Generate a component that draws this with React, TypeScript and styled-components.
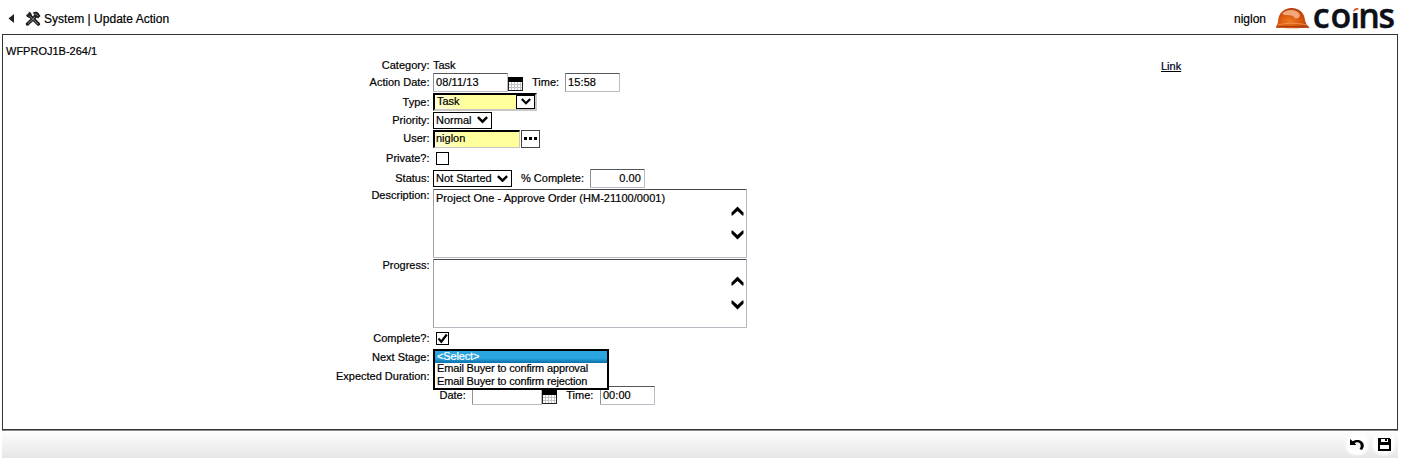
import React from "react";
import styled, { createGlobalStyle, css } from "styled-components";

const GlobalStyle = createGlobalStyle`
  *, *::before, *::after { box-sizing: border-box; }
  html, body { margin: 0; padding: 0; background: #fff; }
  body { font-family: "Liberation Sans", Arial, sans-serif; font-size: 11px; color: #000; -webkit-text-stroke: 0.2px #000; }
`;

const Page = styled.div`
  width: 1401px;
  height: 461px;
  padding: 0 3px 0 2px;
  display: flex;
  flex-direction: column;
`;

const Header = styled.header`
  height: 34px;
  flex: none;
  display: flex;
  align-items: center;
  justify-content: space-between;
  padding: 3px 3px 0 6px;
`;

const Crumb = styled.div`
  display: flex;
  align-items: center;
  font-size: 12px;
  letter-spacing: 0.03px;
  white-space: pre;
  svg { display: block; }
`;

const BackArrow = styled.svg`
  margin-right: 11px;
`;

const ToolsIcon = styled.svg`
  margin-right: 3px;
`;

const Brand = styled.div`
  display: flex;
  align-items: center;
  font-size: 12px;
`;

const UserName = styled.span`
  margin-right: 9px;
`;

const Panel = styled.main`
  height: 396px;
  flex: none;
  border: 1px solid #333;
  box-shadow: 0 1px 0 #8a8a8a;
  display: grid;
  grid-template-columns: 327px 831px auto;
`;

const RecordId = styled.div`
  padding: 10px 0 0 3px;
  line-height: 13px;
`;

const LinkCell = styled.div`
  padding-top: 25px;
  line-height: 13px;
`;

const LinkText = styled.a`
  font-size: 11px;
  color: #00002a;
  text-decoration: underline;
`;

const Form = styled.div`
  padding-top: 21px;
`;

const Row = styled.div<{ $h: number; $top?: boolean }>`
  height: ${(p) => p.$h}px;
  display: flex;
  align-items: ${(p) => (p.$top ? "flex-start" : "center")};
`;

const Label = styled.label<{ $drop?: number }>`
  width: 99.5px;
  flex: none;
  margin-right: 3.5px;
  text-align: right;
  line-height: 13px;
  white-space: nowrap;
  padding-top: ${(p) => p.$drop ?? 0}px;
`;

const InlineLabel = styled.span<{ $l: number; $r: number }>`
  margin: 0 ${(p) => p.$r}px 0 ${(p) => p.$l}px;
  line-height: 13px;
  white-space: nowrap;
`;

const Field = styled.div<{ $w: number; $right?: boolean }>`
  width: ${(p) => p.$w}px;
  height: 19px;
  border: 1px solid #b9bcc4;
  border-top-color: #55555c;
  border-left-color: #8d9098;
  border-radius: 1px;
  background: #fff;
  padding: 0 3px 0 2px;
  line-height: 17px;
  letter-spacing: 0.08px;
  text-align: ${(p) => (p.$right ? "right" : "left")};
`;

const sunken = css`
  border-style: solid;
  border-width: 2px 1px 1px 2px;
  border-color: #000 #c8c8c8 #c8c8c8 #000;
  background: linear-gradient(90deg, #ffffd8 0, #ffff9c 30px);
`;

const TypeBox = styled.div`
  ${sunken}
  width: 104px;
  height: 18px;
  border-width: 2px;
  display: flex;
  align-items: stretch;
  justify-content: space-between;
  padding-left: 2px;
  line-height: 13px;
`;

const DropButton = styled.span`
  width: 19px;
  border: 1px solid #000;
  background: #fff;
  display: flex;
  align-items: center;
  justify-content: center;
`;

const UserBox = styled.div`
  ${sunken}
  width: 87px;
  height: 18px;
  line-height: 12px;
  padding-left: 1px;
`;

const LookupButton = styled.span`
  width: 19px;
  height: 18px;
  margin-left: 1px;
  border: 1px solid #444;
  display: flex;
  align-items: center;
  justify-content: center;
  gap: 2px;
`;

const Dot = styled.i`
  width: 3px;
  height: 3px;
  background: #000;
`;

const Select = styled.div<{ $w: number }>`
  width: ${(p) => p.$w}px;
  height: 17px;
  border: 1px solid #000;
  display: flex;
  align-items: center;
  justify-content: space-between;
  padding: 0 3px 0 2px;
  line-height: 13px;
  white-space: nowrap;
`;

const CheckBox = styled.span`
  width: 13px;
  height: 13px;
  margin-left: 3px;
  border: 1px solid #000;
  display: flex;
  svg { display: block; }
`;

const TextArea = styled.div`
  width: 314px;
  height: 69px;
  margin-top: 1px;
  border: 1px solid #b4b9c0;
  border-top-color: #45454a;
  border-left-color: #a0a0a4;
  border-radius: 1px;
  display: flex;
  justify-content: space-between;
  padding: 2px 2px 0 2px;
  line-height: 13px;
  letter-spacing: 0.03px;
`;

const ScrollArrows = styled.div`
  display: flex;
  flex-direction: column;
  gap: 14px;
  padding-top: 14px;
  svg { display: block; }
`;

const ListAnchor = styled.div`
  position: relative;
  align-self: stretch;
`;

const DropList = styled.div`
  position: absolute;
  z-index: 1;
  top: 1px;
  left: 0;
  width: 176px;
  height: 41px;
  border: 2px solid #000;
  background: #fff;
  white-space: nowrap;
  letter-spacing: -0.16px;
`;

const Option = styled.div<{ $on?: boolean }>`
  height: ${(p) => (p.$on ? 12 : 13)}px;
  line-height: ${(p) => (p.$on ? 10 : 11)}px;
  padding-left: 2px;
  ${(p) => p.$on && css`
    background: linear-gradient(#2aa5e0 60%, #0a6ea6);
    color: #fff;
    -webkit-text-stroke-color: #fff;
  `}
`;

const Footer = styled.footer`
  height: 26px;
  margin-top: 2px;
  flex: none;
  background: linear-gradient(#fdfdfd, #f0f0f0 55%, #e6e6e6);
  display: flex;
  align-items: center;
  justify-content: flex-end;
  gap: 7px;
  padding: 0 4px 3px 0;
`;

const FooterButton = styled.span`
  width: 20px;
  height: 20px;
  border-radius: 8px;
  background: #fff;
  box-shadow: 0 0 3px 1px #fff;
  display: flex;
  align-items: center;
  justify-content: center;
`;

const Chevron = ({ w = 10 }: { w?: number }) => (
  <svg width={w} height={w * 0.7} viewBox="0 0 10 7">
    <path d="M.8 1 5 5.200 9.200 1" fill="none" stroke="#000" strokeWidth="2.200" />
  </svg>
);

const BigChevron = ({ up }: { up?: boolean }) => (
  <svg width="13" height="10" viewBox="0 0 13 10">
    <path
      d={up ? "M6.5 .5 12.500 6.500V9.500H11.500L6.500 5 1.500 9.500H.5V6.500Z" : "M6.500 9.500 12.500 3.500V.5H11.500L6.500 5 1.500 .5H.5V3.500Z"}
      fill="#000"
    />
  </svg>
);

const CalendarSvg = styled.svg`
  display: block;
  margin-top: 3px;
`;

const Calendar = () => (
  <CalendarSvg width="15" height="14" viewBox="0 0 15 14" shapeRendering="crispEdges">
    <rect width="15" height="14" fill="#222" />
    <rect x="1" y="5" width="13" height="8" fill="#fff" />
    <rect width="15" height="5" fill="#000" />
    <path d="M3.500 5v8M6.500 5v8M9.500 5v8M12.500 5v8M1 7.500h13M1 10.500h13" stroke="#c4c4c4" />
  </CalendarSvg>
);

const Helmet = () => (
  <svg width="36" height="22" viewBox="0 0 36 22">
    <defs>
      <radialGradient id="shell" cx="0.4" cy="0.65" r="0.65">
        <stop offset="0" stopColor="#ee7a22" />
        <stop offset="0.5" stopColor="#d9560f" />
        <stop offset="1" stopColor="#b03c0a" />
      </radialGradient>
    </defs>
    <path d="M1 19.500C1.200 17.500 2.800 16.800 3 13C3.500 5 9.500 0 16.500 0C24.500 0 29.500 5 30 12C30.300 15 32 17 34.500 19.500C24 20.500 10 20.500 1 19.500Z" fill="url(#shell)" />
    <path d="M7.500 5.500C10 2.300 16 .8 21 3C24.500 4.800 26 7.500 24 9.300C22 11 20.500 11 19 9C17.500 7 15.500 7.800 13.500 7.300C11.500 6.700 8.500 8 7.500 5.500Z" fill="#f2a878" />
    <path d="M3 17C10 14.800 24 14.800 32 17" fill="none" stroke="#f39a5a" strokeWidth="0.8" />
    <path d="M1.500 19.300C9 18.200 26 18.200 34 19.400" fill="none" stroke="#a03a0c" strokeWidth="1" />
  </svg>
);

const WordmarkSvg = styled.svg`
  margin-left: 2px;
  display: block;
  overflow: visible;
`;

const Wordmark = () => (
  <WordmarkSvg width="82" height="29" viewBox="0 0 82 29">
    <text
      x="-0.3 17.400 37.600 45.200 65.600" y="23.500"
      fontFamily='"Open Sans", "Noto Sans", sans-serif' fontWeight="600" fontSize="34" fill="#0c1018" stroke="#0c1018" strokeWidth="0.4"
    >
      coıns
    </text>
    <rect x="38.500" y="3" width="8" height="6" fill="#fff" />
    <path d="M40.300 8C40.300 5 42 3.800 45.300 4V5.500C43.500 5.500 42 6.300 40.300 8Z" fill="#d8481a" />
  </WordmarkSvg>
);

export default function App() {
  return (
    <>
      <GlobalStyle />
      <Page>
        <Header>
          <Crumb>
            <BackArrow width="6" height="9" viewBox="0 0 6 9"><path d="M6 0V9L.5 4.500Z" fill="#222" /></BackArrow>
            <ToolsIcon width="16" height="15" viewBox="0 0 16 15">
              <path d="M4 4 13.300 13" stroke="#222" strokeWidth="3.600" strokeLinecap="round" />
              <path d="M.8 3.500 2 6 4.500 7 7 4.500 6 1.800 3.500.6 4.200 2.800 2.800 4.200Z" fill="#222" />
              <path d="M11 5 2.500 13" stroke="#222" strokeWidth="3.400" strokeLinecap="round" />
              <path d="M7.500 2C9.500 .2 12 .2 13.500 2L15.500 5 13 7.500 11.500 6 9.800 6.500 8.500 4.800 9.300 3Z" fill="#222" />
              <path d="M4.500 5 13 13.200M10 6 3 12.700M10 2.500 13 5" stroke="#8c8c8c" strokeWidth=".9" />
            </ToolsIcon>
            System | Update Action
          </Crumb>
          <Brand>
            <UserName>niglon</UserName>
            <Helmet />
            <Wordmark />
          </Brand>
        </Header>

        <Panel>
          <RecordId>WFPROJ1B-264/1</RecordId>
          <Form>
            <Row $h={17}><Label $drop={2}>Category:</Label>Task</Row>
            <Row $h={19}>
              <Label>Action Date:</Label>
              <Field $w={75}>08/11/13</Field>
              <Calendar />
              <InlineLabel $l={9} $r={6}>Time:</InlineLabel>
              <Field $w={55}>15:58</Field>
            </Row>
            <Row $h={19}>
              <Label $drop={2}>Type:</Label>
              <TypeBox>Task<DropButton><Chevron /></DropButton></TypeBox>
            </Row>
            <Row $h={18}>
              <Label>Priority:</Label>
              <Select $w={59}>Normal<Chevron w={11} /></Select>
            </Row>
            <Row $h={19}>
              <Label>User:</Label>
              <UserBox>niglon</UserBox>
              <LookupButton><Dot /><Dot /><Dot /></LookupButton>
            </Row>
            <Row $h={21}><Label>Private?:</Label><CheckBox /></Row>
            <Row $h={19}>
              <Label>Status:</Label>
              <Select $w={79}>Not Started<Chevron w={11} /></Select>
              <InlineLabel $l={9} $r={6}>% Complete:</InlineLabel>
              <Field $w={55} $right>0.00</Field>
            </Row>
            <Row $h={70} $top>
              <Label $drop={1}>Description:</Label>
              <TextArea>
                Project One - Approve Order (HM-21100/0001)
                <ScrollArrows><BigChevron up /><BigChevron /></ScrollArrows>
              </TextArea>
            </Row>
            <Row $h={70} $top>
              <Label $drop={1}>Progress:</Label>
              <TextArea>
                <span />
                <ScrollArrows><BigChevron up /><BigChevron /></ScrollArrows>
              </TextArea>
            </Row>
            <Row $h={20}>
              <Label>Complete?:</Label>
              <CheckBox>
                <svg width="11" height="11" viewBox="0 0 11 11"><path d="M1.500 5.500 4.300 8.700 9.800 1.500" fill="none" stroke="#000" strokeWidth="2.200" /></svg>
              </CheckBox>
            </Row>
            <Row $h={19}>
              <Label>Next Stage:</Label>
              <ListAnchor>
                <DropList>
                  <Option $on>&lt;Select&gt;</Option>
                  <Option>Email Buyer to confirm approval</Option>
                  <Option>Email Buyer to confirm rejection</Option>
                </DropList>
              </ListAnchor>
            </Row>
            <Row $h={19}><Label>Expected Duration:</Label></Row>
            <Row $h={19}>
              <InlineLabel $l={109.5} $r={6}>Date:</InlineLabel>
              <Field $w={70} />
              <Calendar />
              <InlineLabel $l={9.5} $r={6.5}>Time:</InlineLabel>
              <Field $w={55}>00:00</Field>
            </Row>
          </Form>
          <LinkCell><LinkText>Link</LinkText></LinkCell>
        </Panel>

        <Footer>
          <FooterButton>
            <svg width="14" height="12" viewBox="0 0 14 12">
              <path d="M0 1V7H6.500L4.600 5.200C7 3.500 10.500 4.500 10.700 7.500C10.700 9 10.200 10 9.500 11L12 12C13.300 10.500 14 8.800 13.700 6.800C13 2 7 .5 2.700 3.300Z" fill="#000" />
            </svg>
          </FooterButton>
          <FooterButton>
            <svg width="14" height="14" viewBox="0 0 14 14" shapeRendering="crispEdges">
              <path d="M1 1H12L14 3V14H1Z" fill="#000" />
              <rect x="4" y="2" width="7" height="3" fill="#fff" />
              <rect x="8" y="2" width="2" height="2" fill="#000" />
              <rect x="3" y="8" width="9" height="4" fill="#fff" />
            </svg>
          </FooterButton>
        </Footer>
      </Page>
    </>
  );
}
